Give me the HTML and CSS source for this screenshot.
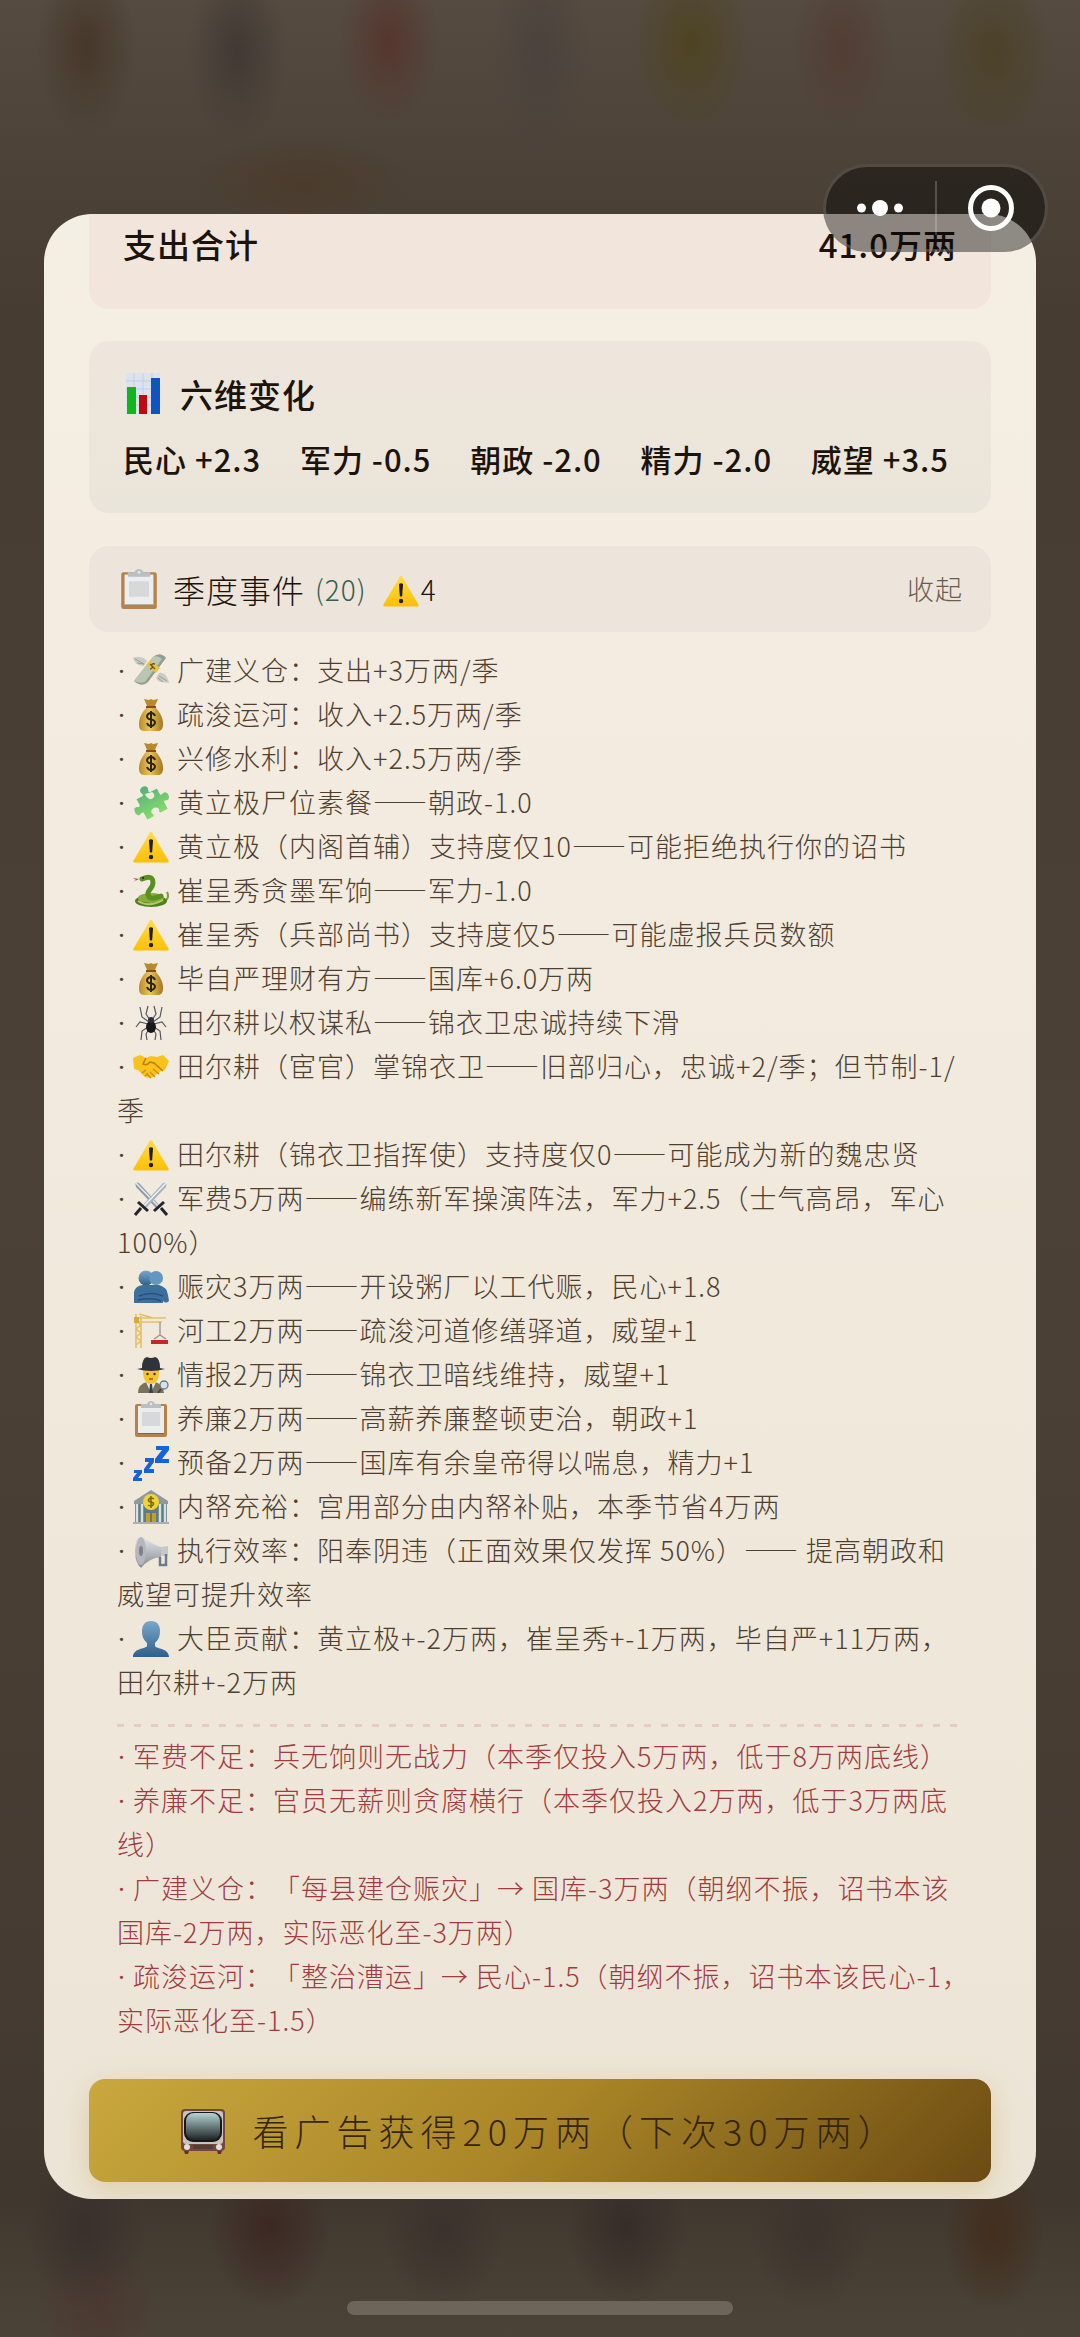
FILE: index.html
```html
<!DOCTYPE html>
<html lang="zh-CN">
<head>
  <meta charset="UTF-8">
  <meta name="viewport" content="width=device-width, initial-scale=1.0">
  <title>季度结算</title>
  <link rel="stylesheet" href="styles.css">
</head>
<body>

  <!-- 图标 -->
  <svg class="sprite" aria-hidden="true">
    <defs>
      <linearGradient id="gYellow" x1="0" y1="0" x2="0" y2="1"><stop offset="0" stop-color="#ffdd45"/><stop offset="1" stop-color="#fbbf08"/></linearGradient>
      <linearGradient id="gBlue" x1="0" y1="0" x2="0" y2="1"><stop offset="0" stop-color="#7aa7cb"/><stop offset="1" stop-color="#2f5f8c"/></linearGradient>
      <linearGradient id="gGreen" x1="0" y1="0" x2="0" y2="1"><stop offset="0" stop-color="#55b07a"/><stop offset="1" stop-color="#86da6c"/></linearGradient>
      <linearGradient id="gBag" x1="0" y1="0" x2="1" y2="0"><stop offset="0" stop-color="#b98a2a"/><stop offset=".45" stop-color="#e9c65c"/><stop offset="1" stop-color="#a4741c"/></linearGradient>
      <linearGradient id="gGrey" x1="0" y1="0" x2="0" y2="1"><stop offset="0" stop-color="#eceef1"/><stop offset="1" stop-color="#85898f"/></linearGradient>
      <linearGradient id="gScreen" x1="0" y1="0" x2="0" y2="1"><stop offset="0" stop-color="#b5d3d2"/><stop offset="1" stop-color="#1c2426"/></linearGradient>
    </defs>

    <symbol id="i-chart" viewBox="0 0 36 42">
      <rect x="1" width="34" height="41" fill="#dbe4ee"/>
      <path d="M1 8h34M1 16h34M1 24h34M1 32h34M9 0v41M18 0v41M27 0v41" stroke="#c3d0de"/>
      <rect x="2" y="14" width="9" height="27" fill="#0cb81c"/>
      <rect x="14" y="22" width="8" height="19" fill="#c00812"/>
      <rect x="26" y="5" width="9" height="36" fill="#0d55c0"/>
    </symbol>
    <symbol id="i-board" viewBox="0 0 36 36">
      <rect x="2" y="3" width="32" height="33" rx="2" fill="#b4824a"/>
      <path d="M5 5h26v28H5z" fill="#ecedef"/>
      <path d="M9 11h18v14H9z" fill="#d6d8da"/>
      <path d="M5 32h26v1H5z" fill="#8b6236"/>
      <path d="M8 3h6c1-4 7-4 8 0h6v4H8z" fill="#b9bfc6"/>
      <circle cx="18" cy="3" r="1.200" fill="#efe8de"/>
    </symbol>
    <symbol id="i-warn" viewBox="0 0 36 36">
      <path d="M17 3.500q1-1.500 2 0l16.500 28q.6 2-1.500 2H2q-2.100 0-1.500-2z" fill="url(#gYellow)"/>
      <path d="M16 11q2-1.500 4 0l-.8 12q-1.200 1-2.400 0z" fill="#231c05"/>
      <circle cx="18" cy="28" r="2.200" fill="#231c05"/>
    </symbol>
    <symbol id="i-fly" viewBox="0 0 36 36">
      <path d="M14 8C9 2 4 5 0 4c1 6 5 9 11 9zM23 25c4 6 8 4 13 5-1-6-5-11-10-10z" fill="#c9ccc4"/>
      <path d="M2 6l9 5M4 10l7 1M34 28l-8-5M30 29l-5-4" stroke="#9aa096"/>
      <path d="M20 4q7-6 13 1L15 29q-6 6-14-1z" fill="#8fa08c"/>
      <path d="M20 4q5-2 9 2L12 29q-5 2-11-1z" fill="#b9c6b4"/>
      <path d="M13 12l10 8 4-5-10-8z" fill="#e6c24a"/>
      <path d="M22 11q-4-1-3 2t-2 3M17 11l5 5" stroke="#6a5520" stroke-width="1.300" fill="none"/>
    </symbol>
    <symbol id="i-bag" viewBox="0 0 36 36">
      <path d="M11 2l5 1 2-1 2 1 5-1-4 9h-6z" fill="#b8892d"/>
      <path d="M14 10h8c5 5 8 11 8 17 0 5-2 7-5 7H11c-4 0-5-3-5-7 0-6 3-12 8-17z" fill="url(#gBag)"/>
      <path d="M13 10h10" stroke="#8a4b20" stroke-width="2"/>
      <path d="M22 19q-1-3-4-3t-4 3q0 3 4 3.500t4 3.500q-1 3-4 3t-4-3M18 14v17" stroke="#2d2410" stroke-width="2" fill="none"/>
    </symbol>
    <symbol id="i-puzzle" viewBox="0 0 36 36">
      <g fill="url(#gGreen)" transform="rotate(-28 18 18)">
        <path d="M7 8h7c2-2-1-3 0-6 2-3 7-3 8 0 1 3-2 4 0 6h8v7c2 2 3-1 5 0 3 2 3 6 0 8-2 1-3-2-5 0v8h-8c-2-2 1-3 0-5-2-3-6-3-8 0-1 2 2 3 0 5H7v-8c-2-2-3 1-6 0-2-2-2-6 0-8 3-1 4 2 6 0z"/>
      </g>
      <path d="M13 11q4 6 8 1 1-3-2-5l-7 2z" fill="#f2ebdf"/>
    </symbol>
    <symbol id="i-snake" viewBox="0 0 36 36">
      <path d="M34 19q3 6-3 10" stroke="#86963a" stroke-width="2" fill="none"/>
      <ellipse cx="18" cy="28" rx="16" ry="6" fill="#4e7f1c"/>
      <ellipse cx="18" cy="25" rx="13" ry="5" fill="#85ad3c"/>
      <path d="M9 6q11-5 11 4c0 6-8 8-4 14 4 3 9 0 12-1" stroke="#5a8f22" stroke-width="5" fill="none" stroke-linecap="round"/>
      <path d="M5 28q11 7 25-1" stroke="#b4c96a" stroke-width="2" fill="none"/>
      <path d="M6 6L0 5l3 2-3 2z" fill="#bf4a4a"/>
      <circle cx="10" cy="5" r="1" fill="#222"/>
    </symbol>
    <symbol id="i-spider" viewBox="0 0 36 36">
      <path d="M16 17L9 12 7 2M17 15l-4-6 2-8M20 17l7-5 2-10M19 15l4-6-2-8M15 19l-8-2-4 5M15 22l-6 4-1 9M16 24l-3 5 1 6M21 19l8-2 4 5M21 22l6 4 1 9M20 24l3 5-1 6" stroke="#55585b" stroke-width="1.200" fill="none"/>
      <ellipse cx="18" cy="22" rx="5" ry="6" fill="#17181a"/>
      <circle cx="18" cy="15" r="3" fill="#2c2e30"/>
    </symbol>
    <symbol id="i-shake" viewBox="0 0 36 36">
      <path d="M0 9l7-3 6 3 5-2 6 1 6-2 6 6-4 9-4 1-8 6-4 1-4-1-7-7-4-1z" fill="#f9c21c"/>
      <path d="M13 9l-3 6q4 2 7-2l4 1 9 8" stroke="#bf7d0a" stroke-width="1.500" fill="none"/>
      <path d="M18 29l-4-4M22 28l-5-5M26 25l-6-5M9 24l4-3M12 27l3-3" stroke="#cf8c0d" stroke-width="1.300"/>
    </symbol>
    <symbol id="i-sword" viewBox="0 0 36 36">
      <path d="M2 1l4 1 20 22-3 3L3 6z" fill="#8f9aa6"/><path d="M2 1l23 24" stroke="#e8edf2" stroke-width="1.500"/>
      <path d="M34 1l-4 1-20 22 3 3L33 6z" fill="#aab4be"/><path d="M34 1L11 25" stroke="#eef2f6" stroke-width="1.500"/>
      <path d="M5 21l10 9M8 27l-6 7M31 21l-10 9M28 27l6 7" stroke="#22262c" stroke-width="3"/>
    </symbol>
    <symbol id="i-hug" viewBox="0 0 36 36">
      <circle cx="13" cy="9" r="7.500" fill="url(#gBlue)"/><circle cx="23" cy="9" r="7" fill="#6396c0"/>
      <path d="M1 34V23q1-6 9-7h16q8 2 9 10l1 6q-3 3-6 0v2z" fill="#3d6f9d"/>
      <path d="M6 27q12-5 24 0M5 31q14-3 23 1" stroke="#24527e" stroke-width="1.500" fill="none"/>
    </symbol>
    <symbol id="i-crane" viewBox="0 0 36 36">
      <path d="M3 1v34M8 3v32M3 8l5 4-5 4 5 4-5 4 5 4-5 4M1 5h32M6 1l14 4M1 9h28" stroke="#e6c060" stroke-width="1.600" fill="none"/>
      <path d="M27 9v13M27 22l-6 4M27 22l6 4" stroke="#98938a" stroke-width="1.300"/>
      <path d="M1 4h5v6H1z" fill="#d8a93d"/><path d="M18 27h17v4H18z" fill="#c5282c"/>
    </symbol>
    <symbol id="i-spy" viewBox="0 0 36 36">
      <path d="M5 36q0-9 9-11h8q8 2 9 11z" fill="#77735c"/>
      <path d="M13 25l5 11 5-11z" fill="#e8eaee"/><path d="M17 27h2l1 9h-4z" fill="#3a4050"/>
      <path d="M10 10h16q1 17-8 17t-8-17z" fill="#f7c52b"/>
      <path d="M9 11q0-10 5-11 4 2 8 0 5 1 5 11l5 1q-14 4-28 0z" fill="#30333a"/>
      <path d="M16 22h4" stroke="#8c4b21" stroke-width="1.300"/>
      <circle cx="14.500" cy="17" r="1.200" fill="#333"/><circle cx="21.500" cy="17" r="1.200" fill="#333"/>
      <circle cx="31" cy="28" r="4" fill="#cfe4ef" stroke="#6d7780" stroke-width="1.300"/><path d="M28 32l-3 4" stroke="#444" stroke-width="2"/>
    </symbol>
    <symbol id="i-zzz" viewBox="0 0 36 36">
      <path d="M23 1h13v4l-7 9h7v4H22v-4l7-9h-6zM12 13h9v4l-5 7h5v4H11v-4l5-7h-4zM1 25h8v3l-4 5h4v3H0v-3l4-5H1z" fill="#1463d8"/>
    </symbol>
    <symbol id="i-bank" viewBox="0 0 36 36">
      <path d="M1 12L18 1l17 11v3H1z" fill="#8d9a9c"/><path d="M2 15h32v19H2z" fill="#5f7c80"/>
      <path d="M4 15v18M9 15v18M27 15v18M32 15v18" stroke="#d9e0e0" stroke-width="2.500"/>
      <path d="M13 24h10v10H13z" fill="#b5a23a"/><path d="M18 24v10" stroke="#4c4a28"/>
      <path d="M0 33h36v2H0z" fill="#a9b1b1"/><circle cx="18" cy="13" r="8" fill="#f0d436"/>
      <path d="M21 10q-3-2-5 0t2 3 2 3-5 0M18 7v12" stroke="#7d6612" stroke-width="1.500" fill="none"/>
    </symbol>
    <symbol id="i-horn" viewBox="0 0 36 36">
      <path d="M7 2q13 10 21 12v10Q16 25 8 35 2 30 2 18T7 2z" fill="url(#gGrey)"/>
      <ellipse cx="8" cy="18" rx="5" ry="14" fill="#b4b8bd"/><ellipse cx="8" cy="18" rx="2" ry="5" fill="#7c8187"/>
      <path d="M28 14l7-1v10h-7z" fill="#c4c7cb"/><path d="M27 24v8h6V21" stroke="#6c7b8a" stroke-width="2.500" fill="none"/>
    </symbol>
    <symbol id="i-bust" viewBox="0 0 36 36">
      <path d="M18 0c6 0 9 4 9 10s-2 9-5 12v3c1 3 14 2 14 11H0c0-9 13-8 14-11v-3c-3-3-5-6-5-12s3-10 9-10z" fill="url(#gBlue)"/>
    </symbol>
    <symbol id="i-tv" viewBox="0 0 46 46">
      <rect x="1" y="1" width="44" height="42" rx="4" fill="#74483f"/>
      <rect x="3" y="3" width="40" height="33" rx="3" fill="#c9c4bd"/>
      <rect x="4" y="4" width="38" height="30" rx="9" fill="#15191b"/>
      <rect x="6" y="5" width="34" height="27" rx="8" fill="url(#gScreen)"/>
      <path d="M13 38h20M13 40h20" stroke="#443b3c" stroke-width="1.500"/>
      <circle cx="7" cy="39" r="3" fill="#e3dfda"/><circle cx="39" cy="39" r="3" fill="#e3dfda"/>
      <path d="M4 43h5l-1 3H5zM37 43h5l-1 3h-3z" fill="#5c362e"/>
    </symbol>
  </svg>

  <!-- 小程序胶囊按钮 -->
  <div class="capsule">
    <button type="button" class="capsule-btn" aria-label="更多">
      <svg width="46" height="46" viewBox="0 0 46 46" fill="#fff"><circle cx="4.500" cy="23" r="4.500"/><circle cx="23" cy="23" r="8"/><circle cx="41.500" cy="23" r="4.500"/></svg>
    </button>
    <span class="capsule-line"></span>
    <button type="button" class="capsule-btn" aria-label="关闭">
      <svg width="46" height="46" viewBox="0 0 46 46"><circle cx="23" cy="23" r="20.500" fill="none" stroke="#fff" stroke-width="5"/><circle cx="23" cy="23" r="9.500" fill="#fff"/></svg>
    </button>
  </div>

  <main class="modal">
    <section class="total">
      <span>支出合计</span>
      <span>41.0万两</span>
    </section>

    <section class="stats">
      <h2><svg class="icon-chart"><use href="#i-chart"/></svg>六维变化</h2>
      <div class="stats-row">
        <span>民心 +2.3</span>
        <span>军力 -0.5</span>
        <span>朝政 -2.0</span>
        <span>精力 -2.0</span>
        <span>威望 +3.5</span>
      </div>
    </section>

    <section class="events">
      <header class="events-head">
        <h2><svg class="icon-head"><use href="#i-board"/></svg>季度事件</h2>
        <span class="count">(20)</span>
        <span class="warn-count"><svg class="icon"><use href="#i-warn"/></svg>4</span>
        <button type="button" class="toggle">收起</button>
      </header>

      <ul class="event-list">
        <li><span class="dot">·</span><svg class="icon"><use href="#i-fly"/></svg>广建义仓：支出+3万两/季</li>
        <li><span class="dot">·</span><svg class="icon"><use href="#i-bag"/></svg>疏浚运河：收入+2.5万两/季</li>
        <li><span class="dot">·</span><svg class="icon"><use href="#i-bag"/></svg>兴修水利：收入+2.5万两/季</li>
        <li><span class="dot">·</span><svg class="icon"><use href="#i-puzzle"/></svg>黄立极尸位素餐——朝政-1.0</li>
        <li><span class="dot">·</span><svg class="icon"><use href="#i-warn"/></svg>黄立极（内阁首辅）支持度仅10——可能拒绝执行你的诏书</li>
        <li><span class="dot">·</span><svg class="icon"><use href="#i-snake"/></svg>崔呈秀贪墨军饷——军力-1.0</li>
        <li><span class="dot">·</span><svg class="icon"><use href="#i-warn"/></svg>崔呈秀（兵部尚书）支持度仅5——可能虚报兵员数额</li>
        <li><span class="dot">·</span><svg class="icon"><use href="#i-bag"/></svg>毕自严理财有方——国库+6.0万两</li>
        <li><span class="dot">·</span><svg class="icon"><use href="#i-spider"/></svg>田尔耕以权谋私——锦衣卫忠诚持续下滑</li>
        <li><span class="dot">·</span><svg class="icon"><use href="#i-shake"/></svg>田尔耕（宦官）掌锦衣卫——旧部归心，忠诚+2/季；但节制-1/季</li>
        <li><span class="dot">·</span><svg class="icon"><use href="#i-warn"/></svg>田尔耕（锦衣卫指挥使）支持度仅0——可能成为新的魏忠贤</li>
        <li><span class="dot">·</span><svg class="icon"><use href="#i-sword"/></svg>军费5万两——编练新军操演阵法，军力+2.5（士气高昂，军心100%）</li>
        <li><span class="dot">·</span><svg class="icon"><use href="#i-hug"/></svg>赈灾3万两——开设粥厂以工代赈，民心+1.8</li>
        <li><span class="dot">·</span><svg class="icon"><use href="#i-crane"/></svg>河工2万两——疏浚河道修缮驿道，威望+1</li>
        <li><span class="dot">·</span><svg class="icon"><use href="#i-spy"/></svg>情报2万两——锦衣卫暗线维持，威望+1</li>
        <li><span class="dot">·</span><svg class="icon"><use href="#i-board"/></svg>养廉2万两——高薪养廉整顿吏治，朝政+1</li>
        <li><span class="dot">·</span><svg class="icon"><use href="#i-zzz"/></svg>预备2万两——国库有余皇帝得以喘息，精力+1</li>
        <li><span class="dot">·</span><svg class="icon"><use href="#i-bank"/></svg>内帑充裕：宫用部分由内帑补贴，本季节省4万两</li>
        <li><span class="dot">·</span><svg class="icon"><use href="#i-horn"/></svg>执行效率：阳奉阴违（正面效果仅发挥 50%）—— 提高朝政和威望可提升效率</li>
        <li><span class="dot">·</span><svg class="icon"><use href="#i-bust"/></svg>大臣贡献：黄立极+-2万两，崔呈秀+-1万两，毕自严+11万两，田尔耕+-2万两</li>
      </ul>

      <ul class="event-list bad">
        <li><span class="dot">·</span>军费不足：兵无饷则无战力（本季仅投入5万两，低于8万两底线）</li>
        <li><span class="dot">·</span>养廉不足：官员无薪则贪腐横行（本季仅投入2万两，低于3万两底线）</li>
        <li><span class="dot">·</span>广建义仓：「每县建仓赈灾」→ 国库-3万两（朝纲不振，诏书本该国库-2万两，实际恶化至-3万两）</li>
        <li><span class="dot">·</span>疏浚运河：「整治漕运」→ 民心-1.5（朝纲不振，诏书本该民心-1，实际恶化至-1.5）</li>
      </ul>
    </section>

    <button type="button" class="ad-btn"><svg class="icon-tv"><use href="#i-tv"/></svg>看广告获得20万两（下次30万两）</button>
  </main>

  <div class="home-bar"></div>

</body>
</html>
```
FILE: styles.css
```css
* {
  margin: 0;
  padding: 0;
  box-sizing: border-box;
}

body {
  font-family: "Noto Sans CJK SC", "Liberation Serif", serif;
  font-weight: 300;
  letter-spacing: 1px;
  text-spacing-trim: space-all;
  color: #1c140c;
  min-height: 100vh;
  display: flex;
  flex-direction: column;
  padding: 214px 44px 22px;
  /* 模糊的底层页面 */
  background:
    radial-gradient(50px 90px at 8% 47px, #46382a, transparent),
    radial-gradient(50px 90px at 22% 52px, #423934, transparent),
    radial-gradient(50px 80px at 36% 42px, #56362e, transparent),
    radial-gradient(50px 110px at 50% 55px, #4b423d, transparent),
    radial-gradient(60px 90px at 64% 44px, #4e4422, transparent),
    radial-gradient(50px 80px at 78% 48px, #523d34, transparent),
    radial-gradient(60px 90px at 92% 54px, #4c4228, transparent),
    radial-gradient(110px 50px at 28% 184px, #4b3b2c, transparent),
    radial-gradient(60px 80px at 8% 2230px, #39302c, transparent),
    radial-gradient(60px 80px at 25% 2228px, #3c2823, transparent),
    radial-gradient(60px 80px at 41% 2230px, #3b322d, transparent),
    radial-gradient(60px 80px at 58% 2226px, #362d29, transparent),
    radial-gradient(60px 80px at 75% 2230px, #3c332d, transparent),
    radial-gradient(50px 80px at 92% 2232px, #422e1d, transparent),
    radial-gradient(60px 70px at 9% 2310px, #4b3931, transparent),
    linear-gradient(#554b41, #4b4137 8%, #463c32 14%, #4b4136 50%, #453b32 85%, #40372e 94%, #4c4338);
}

.sprite {
  position: absolute;
  width: 0;
  height: 0;
}

button {
  font: inherit;
  letter-spacing: inherit;
  border: none;
  background: none;
  cursor: pointer;
}

/* 右上角胶囊 */
.capsule {
  position: absolute;
  top: 164px;
  right: 32px;
  z-index: 2;
  width: 225px;
  height: 88px;
  display: flex;
  align-items: center;
  border: 3px solid rgba(140, 132, 124, 0.4);
  border-radius: 44px;
  background: rgba(0, 0, 0, 0.42);
}

.capsule-btn {
  flex: 1;
  height: 100%;
  display: flex;
  align-items: center;
  justify-content: center;
}

.capsule-line {
  width: 2px;
  height: 54px;
  background: rgba(255, 255, 255, 0.2);
}

/* 弹窗 */
.modal {
  padding: 0 45px 17px;
  border-radius: 48px;
  background: linear-gradient(#f4efe4, #f4ece1 20%, #f0e9dc 55%, #ece5d7);
  overflow: hidden;
}

.total {
  display: flex;
  justify-content: space-between;
  padding: 6px 34px 41px;
  border-radius: 0 0 20px 20px;
  background: #f2e5dc;
  font-size: 33px;
  line-height: 48px;
  font-weight: 500;
}

.stats {
  margin-top: 32px;
  padding: 30px 34px 32px;
  border-radius: 20px;
  background: linear-gradient(#eee6dc, #eae5da);
}

.stats h2 {
  display: flex;
  align-items: center;
  gap: 17px;
  margin-bottom: 20px;
  font-size: 33px;
  line-height: 46px;
  font-weight: 500;
}

.stats-row {
  display: flex;
  justify-content: space-between;
  padding-right: 8px;
  font-size: 31px;
  line-height: 44px;
  font-weight: 500;
}

.icon-chart {
  width: 40px;
  height: 42px;
}

.events-head {
  display: flex;
  align-items: center;
  margin-top: 33px;
  padding: 20px 28px;
  border-radius: 20px;
  background: #ede5dc;
  font-size: 28px;
  line-height: 46px;
}

.events-head h2 {
  display: flex;
  align-items: center;
  gap: 12px;
  font-size: 32px;
  font-weight: 300;
}

.icon-head {
  width: 44px;
  height: 40px;
}

.count {
  margin-left: 10px;
  color: #33614a;
}

.warn-count {
  margin-left: 16px;
}

.warn-count .icon {
  margin-right: 2px;
}

.toggle {
  margin-left: auto;
  font-size: 27px;
  color: #6a5d4e;
}

.event-list {
  list-style: none;
  margin: 16px 28px 0;
  font-size: 27px;
  line-height: 44px;
  color: #4f3f30;
}

.icon {
  width: 36px;
  height: 36px;
  margin: -6px 8px -6px 0;
  vertical-align: -2px;
}

.dot {
  display: inline-block;
  width: 16px;
  font-family: "Liberation Serif", serif;
  line-height: 1;
}

/* 负面事件 */
.bad {
  margin-top: 20px;
  padding-top: 10px;
  color: #a03c40;
  background: repeating-linear-gradient(90deg, #e6cbc1 0 7px, transparent 7px 17px) 0 0 / 100% 3px no-repeat;
}

/* 行尾标点可以略微超出 */
.bad li {
  margin-right: -8px;
}

.ad-btn {
  display: flex;
  align-items: center;
  justify-content: center;
  gap: 26px;
  width: 100%;
  margin-top: 37px;
  padding: 26px 20px;
  border-radius: 16px;
  background: linear-gradient(135deg, #c9a83e, #a98527 50%, #6b4b13);
  box-shadow: 0 8px 30px rgba(190, 150, 50, 0.3);
  font-size: 36px;
  line-height: 51px;
  letter-spacing: 6px;
  color: #35260a;
}

.icon-tv {
  width: 46px;
  height: 46px;
}

.home-bar {
  width: 386px;
  max-width: 60%;
  height: 14px;
  margin: auto auto 0;
  border-radius: 7px;
  background: #6d645a;
}
```
